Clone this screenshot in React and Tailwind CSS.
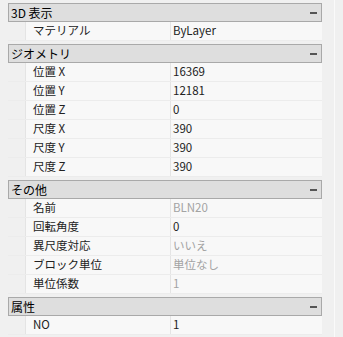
const SECTIONS = [
  { title: '3D 表示', rows: [['マテリアル', 'ByLayer']] },
  {
    title: 'ジオメトリ',
    rows: [
      ['位置 X', '16369'],
      ['位置 Y', '12181'],
      ['位置 Z', '0'],
      ['尺度 X', '390'],
      ['尺度 Y', '390'],
      ['尺度 Z', '390'],
    ],
  },
  {
    title: 'その他',
    rows: [
      ['名前', 'BLN20', true],
      ['回転角度', '0'],
      ['異尺度対応', 'いいえ', true],
      ['ブロック単位', '単位なし', true],
      ['単位係数', '1', true],
    ],
  },
  { title: '属性', rows: [['NO', '1']] },
]

function Section({ title, rows }) {
  return (
    <div className="flex flex-col">
      <div className="h-[19px] flex items-center justify-between border border-[#a9a9a9] bg-[#dedede] pl-[2px] pr-[4px]">
        <span className="text-[12px] text-black">{title}</span>
        <span className="w-[7px] h-[2px] bg-[#555]" />
      </div>
      {rows.map(([name, value, dim]) => (
        <div key={name} className="h-[19px] flex border-b border-[#ececec]">
          <div className="w-[17px] shrink-0" />
          <div className="w-[146px] shrink-0 flex items-center pl-[7px] border-l border-r border-[#e4e4e4] bg-[#f8f8f8] text-[11.5px] text-[#222]">
            {name}
          </div>
          <div className={`flex-1 flex items-center pl-[2px] bg-[#f8f8f8] text-[11.5px] ${dim ? 'text-[#a3a3a3]' : 'text-[#222]'}`}>
            {value}
          </div>
        </div>
      ))}
    </div>
  )
}

export default function App() {
  return (
    <div
      className="w-[343px] h-[337px] overflow-hidden bg-[#f0f0f0] flex"
      style={{ fontFamily: '"Noto Sans CJK JP", "Noto Sans", sans-serif' }}
    >
      <div className="w-[314px] ml-[8px] pt-[3px] flex flex-col gap-[3px]">
        {SECTIONS.map((s) => (
          <Section key={s.title} {...s} />
        ))}
      </div>
      <div className="w-[13px] border-r border-[#fafafa]" />
    </div>
  )
}
